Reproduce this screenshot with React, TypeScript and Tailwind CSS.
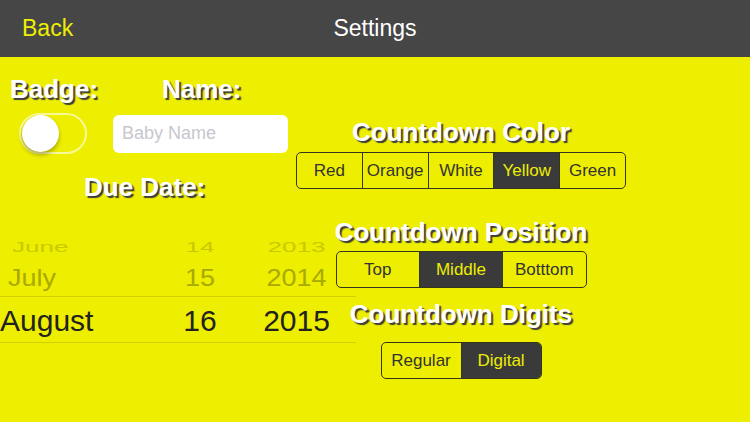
import React from "react";

const font = "font-['Liberation_Sans',Arial,sans-serif]";
const title =
  "text-[26px] leading-[26px] font-bold text-white [text-shadow:2px_2px_1px_#3c3c3c]";

interface SegProps {
  options: string[];
  selected: string;
  width: number;
}

// segmented control, iOS 7 style
const Segmented: React.FC<SegProps> = ({ options, selected, width }) => (
  <div
    className="flex h-[37px] rounded-[5px] border-[1.5px] border-[#35351a] overflow-hidden"
    style={{ width }}
  >
    {options.map((opt, i) => (
      <div
        key={opt}
        className={`flex-1 flex items-center justify-center text-[17px] ${
          i > 0 ? "border-l border-[#35351a]" : ""
        } ${opt === selected ? "bg-[#3a3a3a] text-[#eeee00]" : "text-[#333]"}`}
      >
        {opt}
      </div>
    ))}
  </div>
);

const rows = [
  { m: "June", d: "14", y: "2013", h: "h-[26px] pt-[3px]", cls: "text-[26px] scale-y-[0.58] text-[#c9c900]", pl: "pl-[12px]" },
  { m: "July", d: "15", y: "2014", h: "h-[39px] pt-[4px]", cls: "text-[27px] scale-y-[0.86] text-[#a9a900]", pl: "pl-[8px]" },
];

export default function App() {
  return (
    <div className={`w-[750px] h-[422px] overflow-hidden bg-[#eeee00] ${font}`}>
      {/* nav bar */}
      <div className="h-[57px] bg-[#464646] flex items-center relative">
        <span className="pl-[22px] text-[23px] text-[#eeee00]">Back</span>
        <span className="absolute left-0 right-0 text-center text-[23px] text-white pointer-events-none">
          Settings
        </span>
      </div>

      <div className="flex">
        {/* left column */}
        <div className="w-[296px] shrink-0">
          <div className="flex mt-[19px]">
            <span className={`${title} pl-[10px] w-[162px]`}>Badge:</span>
            <span className={title}>Name:</span>
          </div>

          <div className="flex items-center mt-[11px]">
            <div className="ml-[19px] w-[68px] h-[41px] rounded-full border-2 border-white/60 flex items-center pl-[1px]">
              <div className="w-[37px] h-[37px] rounded-full bg-white shadow-[0_3px_4px_rgba(0,0,0,0.3)]" />
            </div>
            <div className="ml-[26px] w-[175px] h-[38px] rounded-[6px] bg-white flex items-center pl-[9px] text-[18px] text-[#c7c7cd]">
              Baby Name
            </div>
          </div>

          <div className={`${title} pl-[84px] mt-[20px]`}>Due Date:</div>

          {/* date picker */}
          <div className="w-[356px] mt-[31px]">
            {rows.map((r) => (
              <div key={r.m} className={`grid grid-cols-[170px_60px_133px] items-center leading-none ${r.h}`}>
                <span className={`${r.cls} ${r.pl} origin-left`}>{r.m}</span>
                <span className={`${r.cls} text-center`}>{r.d}</span>
                <span className={`${r.cls} text-center`}>{r.y}</span>
              </div>
            ))}
            <div className="border-t border-[#d0d000]" />
            <div className="grid grid-cols-[170px_60px_133px] items-center h-[45px] pt-[3px] leading-none text-[30px] text-[#222]">
              <span>August</span>
              <span className="text-center">16</span>
              <span className="text-center">2015</span>
            </div>
            <div className="border-t border-[#d0d000]" />
          </div>
        </div>

        {/* right column */}
        <div className="w-[330px] flex flex-col items-center pt-[62px]">
          <div className={title}>Countdown Color</div>
          <div className="mt-[7px]">
            <Segmented options={["Red", "Orange", "White", "Yellow", "Green"]} selected="Yellow" width={330} />
          </div>

          <div className={`${title} mt-[30px]`}>Countdown Position</div>
          <div className="mt-[6px]">
            <Segmented options={["Top", "Middle", "Botttom"]} selected="Middle" width={251} />
          </div>

          <div className={`${title} mt-[13px]`}>Countdown Digits</div>
          <div className="mt-[15px]">
            <Segmented options={["Regular", "Digital"]} selected="Digital" width={161} />
          </div>
        </div>
      </div>
    </div>
  );
}
